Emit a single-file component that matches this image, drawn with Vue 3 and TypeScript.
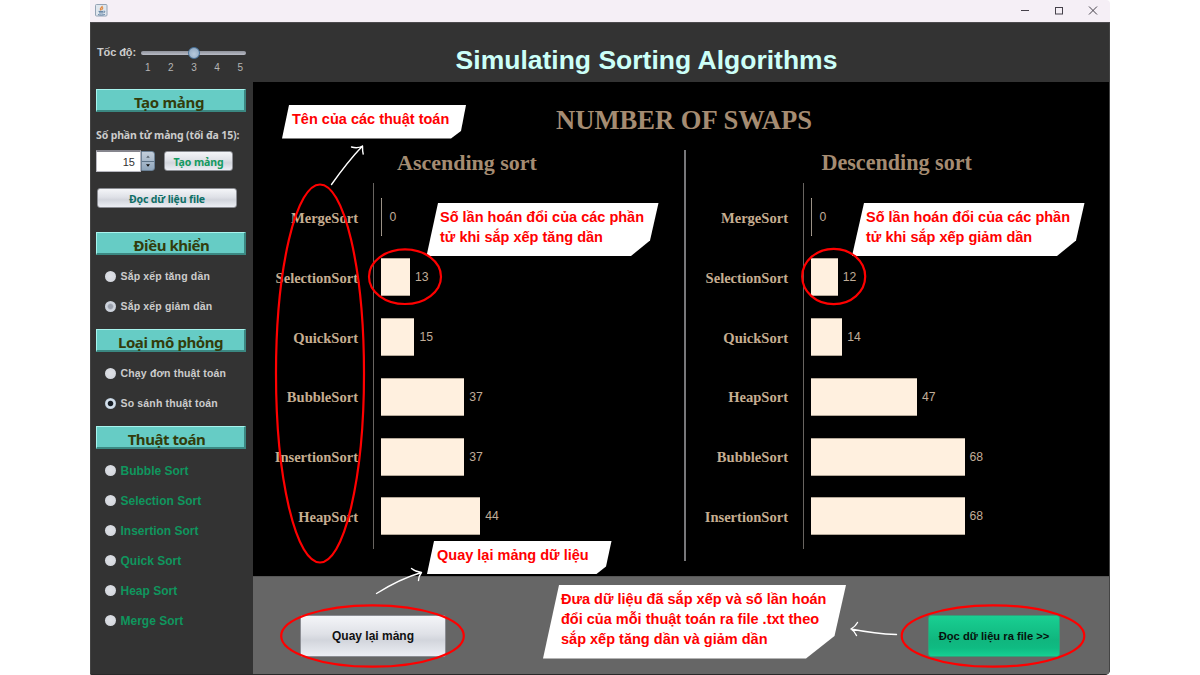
<script setup lang="ts">
interface Bar { name: string; value: number }
interface Chart { title: string; side: string; bars: Bar[] }

const PX_PER_SWAP = 2.265

const charts: Chart[] = [
  {
    title: 'Ascending sort',
    side: 'asc',
    bars: [
      { name: 'MergeSort', value: 0 },
      { name: 'SelectionSort', value: 13 },
      { name: 'QuickSort', value: 15 },
      { name: 'BubbleSort', value: 37 },
      { name: 'InsertionSort', value: 37 },
      { name: 'HeapSort', value: 44 },
    ],
  },
  {
    title: 'Descending sort',
    side: 'desc',
    bars: [
      { name: 'MergeSort', value: 0 },
      { name: 'SelectionSort', value: 12 },
      { name: 'QuickSort', value: 14 },
      { name: 'HeapSort', value: 47 },
      { name: 'BubbleSort', value: 68 },
      { name: 'InsertionSort', value: 68 },
    ],
  },
]

const algorithms: string[] = ['Bubble Sort', 'Selection Sort', 'Insertion Sort', 'Quick Sort', 'Heap Sort', 'Merge Sort']
const speeds: number[] = [1, 2, 3, 4, 5]

const barWidth = (v: number): string => `${Math.max(1, v * PX_PER_SWAP)}px`
</script>

<template>
  <div class="stage">
    <div class="window">
      <div class="titlebar">
        <svg class="java" width="13" height="13" viewBox="0 0 13 13">
          <rect x="0.5" y="0.5" width="11.500" height="11.500" rx="1" fill="#dfe6ee" stroke="#94a3b5" />
          <path d="M7.200 1.800C7.500 3.400 4.600 4 5.400 5.400L6 6.600M8.200 3.600C6.600 4.400 7 5.200 7 6" fill="none" stroke="#e2863c" stroke-width="1.200" />
          <path d="M3.600 7.400H8.200M4 8.900H8M3 10.600C5 11.200 8 11.200 9.800 10.400M8.600 7.200C10.400 6.800 10.200 8.600 8.400 8.800" fill="none" stroke="#4c7196" stroke-width="0.9" />
        </svg>
        <svg class="controls" width="80" height="13" viewBox="0 0 80 13" fill="none" stroke="#45414a" stroke-width="1">
          <path d="M2 6.500H10" />
          <rect x="36.500" y="3.500" width="7" height="6.500" />
          <path d="M70 2.500L78 10.500M78 2.500L70 10.500" />
        </svg>
      </div>

      <div class="body">
        <aside class="sidebar">
          <div class="speed">
            <span class="speed-label">Tốc độ:</span>
            <div class="slider">
              <div class="track"><span class="thumb"></span></div>
              <div class="ticks"><span v-for="s in speeds" :key="s">{{ s }}</span></div>
            </div>
          </div>

          <h2 class="head h-create"><span>Tạo mảng</span></h2>
          <p class="count-label">Số phần tử mảng (tối đa 15):</p>
          <div class="count-row">
            <div class="spinner">
              <span class="num">15</span>
              <span class="steps">
                <svg width="12" height="18" viewBox="0 0 12 18">
                  <path d="M0 9.500H12" stroke="#5f7488" stroke-width="1" />
                  <path d="M4.200 5.800L6 3.500L7.800 5.800Z" fill="#55606c" />
                  <path d="M4 12.200H8L6 14.800Z" fill="#111" />
                </svg>
              </span>
            </div>
            <button class="btn small">Tạo mảng</button>
          </div>
          <button class="btn file">Đọc dữ liệu file</button>

          <h2 class="head h-control"><span>Điều khiển</span></h2>
          <div class="options">
            <label class="radio"><i class="dot"></i>Sắp xếp tăng dần</label>
            <label class="radio"><i class="dot dim"></i>Sắp xếp giảm dần</label>
          </div>

          <h2 class="head h-kind"><span>Loại mô phỏng</span></h2>
          <div class="options">
            <label class="radio"><i class="dot"></i>Chạy đơn thuật toán</label>
            <label class="radio"><i class="dot on"></i>So sánh thuật toán</label>
          </div>

          <h2 class="head h-algo"><span>Thuật toán</span></h2>
          <div class="options">
            <label v-for="a in algorithms" :key="a" class="radio algo"><i class="dot"></i><span>{{ a }}</span></label>
          </div>
        </aside>

        <main class="main">
          <header class="header"><h1>Simulating Sorting Algorithms</h1></header>
          <section class="board">
            <h2 class="board-title">NUMBER OF SWAPS</h2>
            <div class="charts">
              <div v-for="c in charts" :key="c.side" class="chart" :class="c.side">
                <h3>{{ c.title }}</h3>
                <div class="plot">
                  <div class="names"><span v-for="b in c.bars" :key="b.name">{{ b.name }}</span></div>
                  <div class="bars">
                    <div v-for="b in c.bars" :key="b.name" class="bar-row">
                      <div class="bar" :class="{ zero: b.value === 0 }" :style="{ width: barWidth(b.value) }"></div>
                      <span class="val">{{ b.value }}</span>
                    </div>
                  </div>
                </div>
              </div>
            </div>
          </section>
          <footer class="footer">
            <button class="btn back">Quay lại mảng</button>
            <button class="btn export">Đọc dữ liệu ra file &gt;&gt;</button>
          </footer>
        </main>
      </div>
    </div>

    <svg class="notes" width="1200" height="675" viewBox="0 0 1200 675">
      <g fill="#fff">
        <path d="M289 105H466L461 131L451 138.500H282Z" />
        <path d="M438 203H658.500L650 240.500L631 256H426.500Z" />
        <path d="M864 203H1084.500L1076 240.500L1057 256H852Z" />
        <path d="M434 541H611.500L606 566.500L596.500 574H427Z" />
        <path d="M559 585H846L834.500 636L806 658.500H543Z" />
      </g>
      <g fill="none" stroke="#f00" stroke-width="2.2">
        <ellipse cx="320" cy="373.500" rx="44" ry="189" />
        <ellipse cx="405" cy="276.700" rx="36" ry="27.300" />
        <ellipse cx="833.700" cy="276.500" rx="31.500" ry="27.700" />
        <ellipse cx="372.500" cy="636" rx="91.300" ry="30.700" />
        <ellipse cx="993" cy="636" rx="91.300" ry="30.700" />
      </g>
      <g fill="none" stroke="#fff" stroke-width="1.400" stroke-linecap="round" stroke-linejoin="round">
        <path d="M331.500 184.500C340 172.500 352 157 362.500 146M351.500 147C355 148 360 147.500 362.500 146C362.500 149 362.500 151.500 363.200 154" />
        <path d="M376.500 593.500C390 585 406 577 421.500 572.500M411.500 568.500C414.500 571 418 572 421.500 572.500C419.500 575 418.500 577.500 418.500 580.500" />
        <path d="M896.500 634.500C881 634 866 632 851 629M857.500 622.500C856 625.500 853.500 627.500 851 629C853.500 630.500 855.500 633 856.500 635.500" />
      </g>
    </svg>
    <p class="note n1">Tên của các thuật toán</p>
    <p class="note n2">Số lần hoán đổi của các phần<br>tử khi sắp xếp tăng dần</p>
    <p class="note n3">Số lần hoán đổi của các phần<br>tử khi sắp xếp giảm dần</p>
    <p class="note n4">Quay lại mảng dữ liệu</p>
    <p class="note n5">Đưa dữ liệu đã sắp xếp và số lần hoán<br>đổi của mỗi thuật toán ra file .txt theo<br>sắp xếp tăng dần và giảm dần</p>
  </div>
</template>

<style scoped>
.stage { position: relative; width: 1200px; height: 675px; background: #fff; overflow: hidden; font-family: "Liberation Sans", Arial, sans-serif; }
.stage * { box-sizing: border-box; }
h1, h2, h3, p { margin: 0; }
.window { width: 1020px; height: 675px; margin-left: 90px; display: flex; flex-direction: column; border-radius: 0 4px 5px 2px; overflow: hidden; }
.titlebar { height: 22px; flex: none; background: #f5eff6; display: flex; justify-content: space-between; padding: 4px 11px 0 5px; }
.controls { display: block; }
.body { flex: 1; display: flex; border-top: 1px solid #4c4a4d; border-bottom: 1px solid #292929; background: #333; }

.sidebar { width: 163px; flex: none; background: #333; padding: 17px 7px 0 5px; display: flex; flex-direction: column; border-left: 1px solid #444; }
.speed { height: 49px; display: flex; }
.speed-label { width: 45px; padding-left: 1px; font: bold 11px/24px "Liberation Sans", sans-serif; letter-spacing: -.1px; color: #ccc; white-space: nowrap; }
.slider { width: 105px; padding-top: 11px; }
.track { position: relative; height: 4px; border-radius: 2px; background: linear-gradient(#8f929b, #b9bcc6); }
.thumb { position: absolute; left: 47px; top: -4px; width: 12px; height: 12px; border-radius: 50%; background: radial-gradient(circle at 50% 60%, #b6c9dc, #89a3bd); border: 1.500px solid #48729a; }
.ticks { display: flex; justify-content: space-between; padding: 6px 3px 0 4px; font: 10px/14px "Liberation Sans", sans-serif; color: #b5b5b5; }

.head { height: 23px; width: 150px; flex: none; background: #66ccc5; border: 1px solid; border-width: 1px 2px 2px 1px; border-color: #a8f4ee #3b8882 #3b8882 #a8f4ee; color: #333c0c; font: bold 15px/25px "Noto Sans", sans-serif; letter-spacing: -.45px; white-space: nowrap; display: flex; justify-content: center; }
.h-create { padding-right: 3px; letter-spacing: -.3px; }
.h-control { margin-top: 24px; padding-left: 2px; }
.h-kind { margin-top: 8px; }
.h-algo { margin-top: 8px; padding-right: 8px; }
.count-label { margin-top: 15px; height: 16px; font: bold 10.500px/16px "Noto Sans", sans-serif; letter-spacing: -.14px; color: #ccc; white-space: nowrap; }
.count-row { margin-top: 7px; height: 22px; display: flex; align-items: center; justify-content: space-between; padding-right: 13px; }
.spinner { width: 59px; height: 22px; display: flex; align-items: center; }
.num { width: 45px; height: 22px; background: #fff; border: 1px solid #b8b8c0; border-top: 2px solid #85858d; text-align: right; padding-right: 5px; font: 11px/20px "Liberation Sans", sans-serif; color: #333; }
.steps { width: 14px; height: 20px; background: linear-gradient(#c3cedb, #8fa5bb); border: 1px solid #6c8196; border-radius: 0 3px 3px 0; display: flex; align-items: center; justify-content: center; }
.btn { display: block; flex: none; margin: 0; padding: 0; border: 1px solid #8b8d93; border-radius: 3px; background: linear-gradient(#f4f5f8, #dfe1e7 45%, #d2d5dc 60%, #eceef4); white-space: nowrap; text-align: center; }
.small { width: 69px; height: 20px; color: #139a60; font: bold 10.500px/20px "Noto Sans", sans-serif; letter-spacing: -.1px; }
.file { width: 140px; height: 20px; margin: 16px 0 0 1px; color: #0d6e66; font: bold 10.500px/20px "Noto Sans", sans-serif; letter-spacing: -.15px; }

.options { padding: 6px 0 0 9px; display: flex; flex-direction: column; }
.radio { height: 30px; display: flex; align-items: center; gap: 4.500px; font: bold 10.500px/30px "Liberation Sans", sans-serif; letter-spacing: .16px; color: #ccc; white-space: nowrap; }
.dot { width: 11px; height: 11px; flex: none; border-radius: 50%; background: radial-gradient(circle at 50% 45%, #dfe1e6, #d6d9df 60%, #bfc2c8); }
.dot.dim { background: radial-gradient(circle, #9aa0ac 0 2px, #d0d5de 3.500px, #c2c8d2); }
.dot.on { background: radial-gradient(circle, #151c24 0 2.200px, #c9d7e4 3.200px, #dbe5ee 4px, #7691ac); }
.algo { color: #0f965e; font-size: 12px; letter-spacing: 0; }
.algo span { padding-top: 2px; }

.main { flex: 1; display: flex; flex-direction: column; border-right: 1px solid #444; }
.header { height: 59px; background: #333; display: flex; justify-content: center; padding-right: 69px; }
h1 { font: bold 26.500px/74px "Liberation Sans", sans-serif; color: #ccfff8; white-space: nowrap; }
.board { height: 494px; background: #000; }
.board-title { height: 68px; padding: 22px 0 0 303px; font: bold 26.600px/32px "Liberation Serif", serif; color: #a58c72; white-space: nowrap; }
.charts { display: flex; }
.chart { height: 411px; width: 433px; }
.asc { border-right: 2px solid #77777a; }
.desc { width: 420px; }
h3 { height: 33px; padding-left: 144px; font: bold 22px/26px "Liberation Serif", serif; color: #a58c72; white-space: nowrap; }
.desc h3 { padding-left: 135.500px; font-size: 22.100px; }
.plot { display: flex; height: 366px; }
.names { width: 105px; display: flex; flex-direction: column; padding-top: 6px; }
.desc .names { width: 102px; }
.names span { height: 59.800px; font: bold 14.550px/59.800px "Liberation Serif", serif; color: #c6ae91; text-align: right; }
.bars { margin-left: 15px; padding: 4.500px 0 0 6.500px; border-left: 1px solid #686460; }
.bar-row { height: 59.800px; display: flex; align-items: center; gap: 5px; }
.bar { height: 38px; background: #fff0df; border: 1px solid #b5a99a; border-width: 1px 0; }
.bar.zero { background: #9a9186; margin-right: 3px; }
.val { font: 12.200px/20px "Liberation Sans", sans-serif; color: #c0ad98; }

.footer { flex: 1; background: #666; border-top: 1px solid #565656; display: flex; justify-content: space-between; padding: 38px 49px 0 47px; }
.back { width: 146px; height: 42px; border-radius: 2px; color: #111; font: bold 12px/41px "Liberation Sans", sans-serif; }
.export { width: 132px; height: 42px; border-color: #359e78; background: linear-gradient(#19cf92, #10b67e 60%, #0fbb82 80%, #15d093); color: #06120d; font: bold 11.200px/41px "Liberation Sans", sans-serif; }

.notes { position: absolute; left: 0; top: 0; }
.note { position: absolute; color: #f00; font: bold 14.520px/20px "Liberation Sans", sans-serif; white-space: nowrap; }
.n1 { left: 292px; top: 109px; }
.n2 { left: 440px; top: 207px; }
.n3 { left: 866px; top: 207px; }
.n4 { left: 437px; top: 545px; }
.n5 { left: 561px; top: 589px; }
</style>

<style>
body { margin: 0; background: #fff; }
</style>
